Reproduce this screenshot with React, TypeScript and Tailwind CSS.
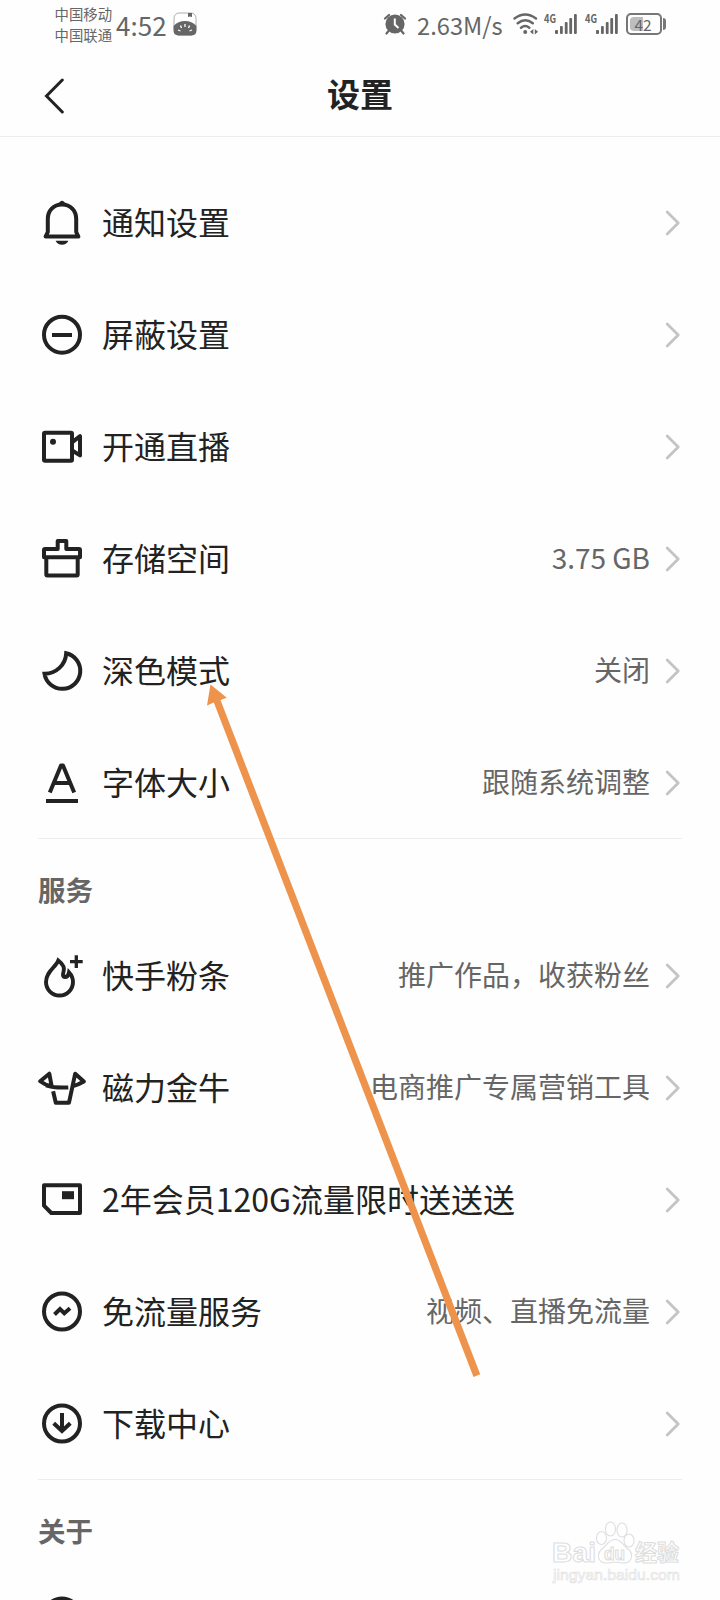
import type { ReactNode } from 'react';

const INK = '#222222';
const GREY = '#666666';

function Icon({ children }: { children: ReactNode }) {
  return (
    <svg className="shrink-0" width="48" height="48" viewBox="0 0 48 48" fill="none" stroke={INK} strokeWidth="4">
      {children}
    </svg>
  );
}

const BellIcon = () => (
  <Icon>
    <path d="M7.6 37.6L9.800 33V20C9.800 11.5 15.500 5.500 24 5.500S38.200 11.500 38.200 20V33L40.400 37.600Z" strokeLinejoin="round" />
    <path d="M20 5.500Q24 -2 28 5.500Z" fill={INK} stroke="none" />
    <path d="M17.600 41.800H30.400Q28.500 45.700 24 45.700T17.600 41.800Z" fill={INK} stroke="none" />
  </Icon>
);
const BlockIcon = () => (
  <Icon>
    <circle cx="24" cy="23.700" r="18" />
    <path d="M14 24H34" />
  </Icon>
);
const LiveIcon = () => (
  <Icon>
    <rect x="6" y="9.800" width="28" height="28" rx="1" />
    <circle cx="15" cy="18.700" r="3" fill={INK} stroke="none" />
    <path d="M35 18.600L42 13.200V32.400L35 28" strokeLinejoin="round" />
  </Icon>
);
const StorageIcon = () => (
  <Icon>
    <path d="M6 22.300V15Q6 14 7 14H19.700V6H28.300V14H41Q42 14 42 15V22.300Z" strokeLinejoin="round" />
    <path d="M8.300 22V39.500Q8.300 40.500 9.300 40.500H38.700Q39.700 40.500 39.700 39.500V22" />
  </Icon>
);
const MoonIcon = () => (
  <Icon>
    <path d="M28.200 6.300A18 18 0 1 1 6.500 26.700A21.500 21.500 0 0 0 28.200 6.300Z" />
  </Icon>
);
const FontIcon = () => (
  <Icon>
    <path d="M11.800 33.600L23 6.500H25L36.200 33.600M15.500 24H32.500" strokeLinejoin="round" />
    <path d="M8 42H40" />
  </Icon>
);
const FlameIcon = () => (
  <Icon>
    <path d="M20.300 8.500C18 15 8 19.500 8 30A13.500 13.500 0 0 0 35 30C35 26 33.500 23 31 20.300C30.500 23 29.500 25 27 25C24.800 25 24.500 23 25.500 20C26.800 16 25 12 20.300 8.500Z" strokeWidth="3.900" />
    <path d="M32 9.700H44.700M38.300 3.300V16" strokeWidth="3.300" />
  </Icon>
);
const BullIcon = () => (
  <Icon>
    <path d="M2.200 17.200L11.300 9.700L13.700 22.300Q7 21 2.200 17.200Z" strokeWidth="4" strokeLinejoin="round" />
    <path d="M8 21.300Q17 24.300 30.300 23.400" />
    <path d="M15.100 27.200L17.800 38.700H31L37.200 9.700L45.800 17.500Q40 21 34.500 22.200" strokeWidth="4" strokeLinejoin="round" />
  </Icon>
);
const SimIcon = () => (
  <Icon>
    <path d="M6 9.300H42V37H13.300L6 29.700Z" strokeLinejoin="round" />
    <rect x="24" y="15.200" width="12" height="8" fill={INK} stroke="none" />
  </Icon>
);
const TrafficIcon = () => (
  <Icon>
    <circle cx="24" cy="23.500" r="18" />
    <path d="M16.500 26.500L22 21L26.300 25.200L32 20.300" />
  </Icon>
);
const DownloadIcon = () => (
  <Icon>
    <circle cx="24" cy="23.500" r="18" />
    <path d="M24 13V31M15.700 23.300L24 31L32.300 23.300" />
  </Icon>
);
const AboutIcon = () => (
  <Icon>
    <circle cx="24" cy="23.500" r="18" />
  </Icon>
);

type Item = { label: string; value?: string; icon: ReactNode };

const general: Item[] = [
  { label: '通知设置', icon: <BellIcon /> },
  { label: '屏蔽设置', icon: <BlockIcon /> },
  { label: '开通直播', icon: <LiveIcon /> },
  { label: '存储空间', value: '3.75 GB', icon: <StorageIcon /> },
  { label: '深色模式', value: '关闭', icon: <MoonIcon /> },
  { label: '字体大小', value: '跟随系统调整', icon: <FontIcon /> },
];

const services: Item[] = [
  { label: '快手粉条', value: '推广作品，收获粉丝', icon: <FlameIcon /> },
  { label: '磁力金牛', value: '电商推广专属营销工具', icon: <BullIcon /> },
  { label: '2年会员120G流量限时送送送', icon: <SimIcon /> },
  { label: '免流量服务', value: '视频、直播免流量', icon: <TrafficIcon /> },
  { label: '下载中心', icon: <DownloadIcon /> },
];

function Row({ label, value, icon }: Item) {
  return (
    <li className="flex h-28 items-center pr-[39px] pl-[38px]">
      {icon}
      <span className="ml-4 flex-1 pb-[5px] text-[32px] leading-[46px] whitespace-nowrap text-[#222222]">{label}</span>
      {value && <span className="pb-[4px] text-[28px] leading-10 whitespace-nowrap text-[#666666]">{value}</span>}
      <svg className="ml-[15px] shrink-0" width="16" height="28" viewBox="0 0 16 28" fill="none" stroke="#c4c4c4" strokeWidth="2.800">
        <path d="M2.200 3L13.200 14L2.200 25" strokeLinecap="round" strokeLinejoin="round" />
      </svg>
    </li>
  );
}

function Section({ title }: { title: string }) {
  return (
    <>
      <div className="mx-[38px] -mt-px h-px bg-[#ececec]" />
      <h2 className="flex h-[81px] items-center px-[38px] pt-[18px] text-[27.500px] leading-10 font-bold text-[#666666]">{title}</h2>
    </>
  );
}

function Signal() {
  return (
    <div className="flex items-start">
      <span className="w-[11px] origin-left scale-x-[0.800] text-[11.500px] leading-[9px] font-bold">4G</span>
      <svg width="22" height="20" viewBox="0 0 22 20" fill={GREY}>
        <rect x="0" y="16" width="3" height="4" rx="1" />
        <rect x="5" y="12" width="2.800" height="8" rx="1" />
        <rect x="9.800" y="8" width="2.800" height="12" rx="1" />
        <rect x="14.300" y="4" width="2.800" height="16" rx="1" />
        <rect x="19" y="0" width="2.800" height="20" rx="1" />
      </svg>
    </div>
  );
}

function StatusBar() {
  return (
    <div className="flex h-12 items-center pr-[54px] pl-[54.500px] text-[#666666]">
      <div className="flex flex-col text-[14.400px] leading-[21px]">
        <span>中国移动</span>
        <span>中国联通</span>
      </div>
      <span className="ml-1 pt-0.5 text-[26px] leading-8">4:52</span>
      <svg className="ml-[6px]" width="24" height="24" viewBox="0 0 24 24">
        <rect x="1" y="1" width="22" height="22" rx="5" fill="#fff" stroke="#999" strokeWidth="0.800" />
        <path d="M15 1H19V5L17 4.500L15 5Z" fill={GREY} />
        <path d="M.6 14Q5 9 12 9T23.400 14V18.500Q23.400 23.400 18.500 23.400H5.500Q.6 23.400 .6 18.500Z" fill={GREY} />
        <path d="M12 12V15M7.500 13.500L8.500 16M16.500 13.500L15.500 16M5 18L7.500 19M19 18L16.500 19" stroke="#fff" strokeWidth="1.300" />
      </svg>
      <div className="flex-1" />
      <svg width="24" height="22" viewBox="0 0 24 22" fill={GREY}>
        <circle cx="12" cy="11" r="9.600" />
        <path d="M2 5.500L6 2M22 5.500L18 2M5.500 18L3.500 20.500M18.500 18L20.500 20.500" stroke={GREY} strokeWidth="2.200" strokeLinecap="round" />
        <path d="M11.800 5.500V11.500L15.500 15" fill="none" stroke="#fff" strokeWidth="2" />
      </svg>
      <span className="ml-[10px] w-[88px] pt-0.5 text-[23.700px] leading-8 whitespace-nowrap">2.63M/s</span>
      <svg className="ml-[8px]" width="26" height="22" viewBox="0 0 26 22" fill="none" stroke={GREY} strokeWidth="2.400" strokeLinecap="round">
        <path d="M1.500 5.500Q12.200 -2.500 23 5.500M4.700 10.300Q12.200 4.300 19.800 10.300M8 14.700Q12.200 11.500 16.300 14.700" />
        <circle cx="12.200" cy="19" r="2" fill={GREY} stroke="none" />
        <path d="M20.300 16V21.500L17 18.700ZM21.800 16V21.500L25 18.700Z" fill={GREY} stroke="none" />
      </svg>
      <div className="ml-[5px]"><Signal /></div>
      <div className="ml-[8px]"><Signal /></div>
      <div className="ml-2 flex items-center">
        <div className="flex h-[22px] w-9 rounded-[5px] border-2 border-[#777] p-0.5">
          <div className="h-full w-[13px] rounded-l-sm bg-[#bdbdbd]" />
          <span className="-ml-2.5 w-5 text-center text-[15.500px] leading-[14px]">42</span>
        </div>
        <div className="ml-px h-3 w-[3px] rounded-r-sm bg-[#777]" />
      </div>
    </div>
  );
}

function Watermark() {
  return (
    <svg className="absolute top-[1518px] left-[548px]" width="140" height="72" viewBox="0 0 140 72" fill="#fff" stroke="#dedede" strokeWidth="1.100">
      <g className="font-['Liberation_Sans','Noto_Sans_CJK_SC',sans-serif] font-bold">
        <text x="4" y="44" fontSize="28" textLength="44" lengthAdjust="spacingAndGlyphs">Bai</text>
        <ellipse cx="53.500" cy="20" rx="5" ry="6.500" />
        <ellipse cx="62.500" cy="11" rx="5" ry="7" />
        <ellipse cx="74" cy="12" rx="5" ry="7" />
        <ellipse cx="81" cy="22.500" rx="5" ry="6.500" />
        <path d="M67 21.500C73 21.500 75 27 80 31C86 36 84 45 76 45C72 45 70 44 67 44S62 45 58 45C50 45 48 36 54 31C59 27 61 21.500 67 21.500Z" />
        <text x="56" y="41.500" fontSize="18" textLength="21" lengthAdjust="spacingAndGlyphs">du</text>
        <text x="87" y="42.500" fontSize="22.500" textLength="44" lengthAdjust="spacingAndGlyphs">经验</text>
      </g>
      <text x="5" y="61.500" fontSize="15" textLength="127" lengthAdjust="spacingAndGlyphs" strokeWidth="0.600" className="font-['Liberation_Sans',sans-serif]">jingyan.baidu.com</text>
    </svg>
  );
}

export default function App() {
  return (
    <div className="relative h-[1600px] w-[720px] overflow-hidden bg-[#fefefe] font-['Noto_Sans_CJK_SC',sans-serif]">
      <StatusBar />
      <header className="grid h-[89px] grid-cols-3 items-center border-b border-[#ededed] px-[44px]">
        <svg className="mt-[7px]" width="22" height="36" viewBox="0 0 22 36" fill="none" stroke={INK} strokeWidth="3">
          <path d="M18.300 2L2.500 18L18.300 34" strokeLinecap="round" />
        </svg>
        <h1 className="pt-px text-center text-[33px] leading-[46px] font-bold text-[#222222]">设置</h1>
      </header>
      <ul className="pt-[30px]">
        {general.map((item) => <Row key={item.label} {...item} />)}
      </ul>
      <Section title="服务" />
      <ul>
        {services.map((item) => <Row key={item.label} {...item} />)}
      </ul>
      <Section title="关于" />
      <ul>
        <li className="h-28 px-[38px] pt-8"><AboutIcon /></li>
      </ul>
      <svg className="pointer-events-none absolute top-0 left-0" width="720" height="1600" viewBox="0 0 720 1600">
        <path d="M210.500 684.500L226.800 697.700L220.500 700L480.200 1374.300L473.500 1377L213.800 702.600L207 705.500Z" fill="#ee934c" />
      </svg>
      <Watermark />
    </div>
  );
}
